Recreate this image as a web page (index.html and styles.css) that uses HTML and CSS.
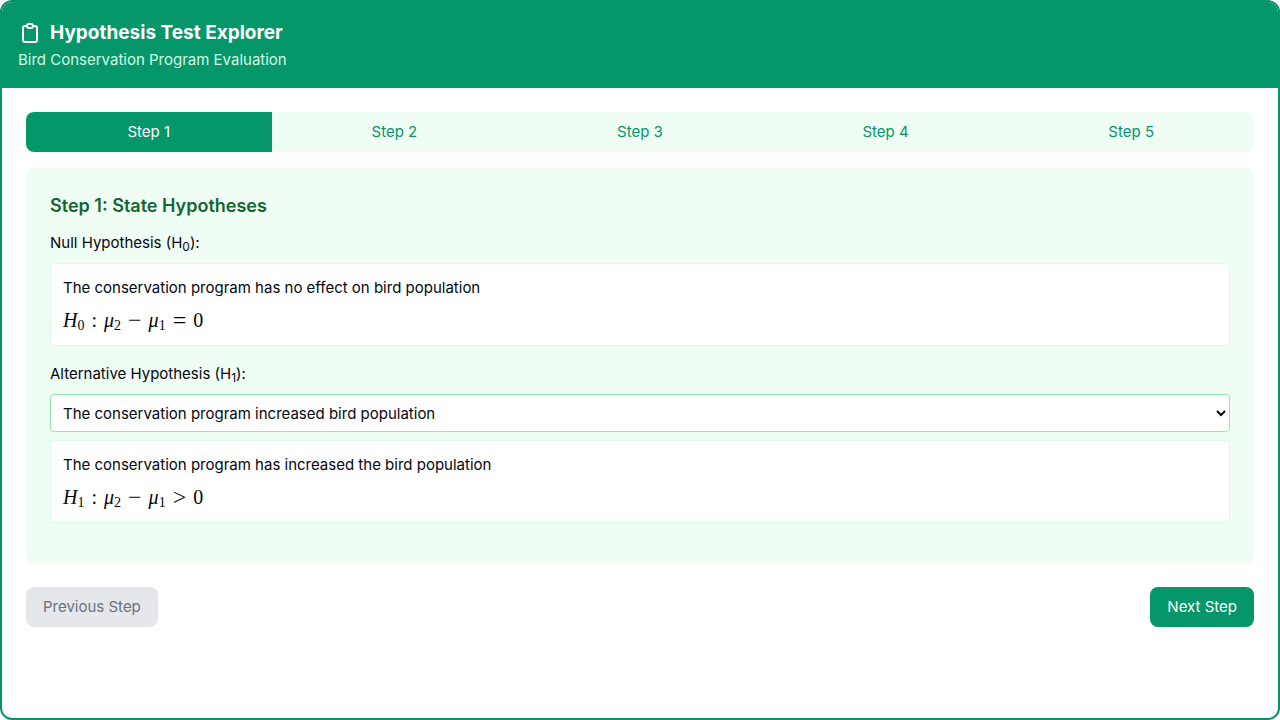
FILE: index.html
```html
<!DOCTYPE html>
<html lang="en">
<head>
    <meta charset="UTF-8">
    <meta name="viewport" content="width=device-width, initial-scale=1.0">
    <title>Hypothesis Test Explorer</title>
    <link rel="stylesheet" href="styles.css">
</head>
<body>
    <div class="explorer">
        <header class="header">
            <h1>
                <svg class="header-icon" viewBox="0 0 24 24" aria-hidden="true">
                    <path d="M9 5H7a2 2 0 0 0-2 2v12a2 2 0 0 0 2 2h10a2 2 0 0 0 2-2V7a2 2 0 0 0-2-2h-2M9 5a2 2 0 0 0 2 2h2a2 2 0 0 0 2-2M9 5a2 2 0 0 1 2-2h2a2 2 0 0 1 2 2"/>
                </svg>
                Hypothesis Test Explorer
            </h1>
            <p>Bird Conservation Program Evaluation</p>
        </header>

        <main class="content">
            <nav class="steps">
                <button type="button" class="step active">Step 1</button>
                <button type="button" class="step">Step 2</button>
                <button type="button" class="step">Step 3</button>
                <button type="button" class="step">Step 4</button>
                <button type="button" class="step">Step 5</button>
            </nav>

            <section class="panel">
                <h2>Step 1: State Hypotheses</h2>

                <div class="field">
                    <p class="label">Null Hypothesis (H<sub>0</sub>):</p>
                    <div class="statement">
                        <p>The conservation program has no effect on bird population</p>
                        <p class="formula"><span><i>H</i><sub>0</sub></span><span>:</span><span><i>μ</i><sub>2</sub></span><span class="operator">−</span><span><i>μ</i><sub>1</sub></span><span class="operator">=</span><span>0</span></p>
                    </div>
                </div>

                <div class="field">
                    <label class="label" for="alternative">Alternative Hypothesis (H<sub>1</sub>):</label>
                    <select id="alternative" class="select">
                        <option value="increased" selected>The conservation program increased bird population</option>
                        <option value="decreased">The conservation program decreased bird population</option>
                        <option value="changed">The conservation program changed bird population</option>
                    </select>
                    <div class="statement">
                        <p>The conservation program has increased the bird population</p>
                        <p class="formula"><span><i>H</i><sub>1</sub></span><span>:</span><span><i>μ</i><sub>2</sub></span><span class="operator">−</span><span><i>μ</i><sub>1</sub></span><span class="operator">&gt;</span><span>0</span></p>
                    </div>
                </div>
            </section>

            <div class="actions">
                <button type="button" class="button" disabled>Previous Step</button>
                <button type="button" class="button">Next Step</button>
            </div>
        </main>
    </div>
</body>
</html>
```
FILE: styles.css
```css
* {
    box-sizing: border-box;
}

body {
    margin: 0;
    font-family: Inter, "Liberation Sans", sans-serif;
    font-size: 15px;
    line-height: 24px;
    color: #030712;
    background-color: white;
}

h1, h2, p {
    margin: 0;
}

button, select {
    font: inherit;
}

sub {
    font-size: 12px;
    line-height: 0;
    vertical-align: -3px;
}

.explorer {
    min-height: 100vh;
    border: 2px solid #059669;
    border-radius: 12px;
    overflow: hidden;
}

.header {
    padding: 16px;
    background-color: #059669;
    color: white;
}

.header h1 {
    display: flex;
    align-items: center;
    gap: 8px;
    font-size: 19px;
    font-weight: 700;
    line-height: 30px;
}

.header p {
    color: #d1fae5;
}

.header-icon {
    width: 24px;
    height: 24px;
    fill: none;
    stroke: currentColor;
    stroke-width: 2;
    stroke-linecap: round;
    stroke-linejoin: round;
}

.content {
    padding: 24px;
}

.steps {
    display: flex;
    border-radius: 8px;
    overflow: hidden;
    margin-bottom: 16px;
}

.step {
    flex: 1;
    padding: 8px;
    border: none;
    background-color: #f0fdf4;
    color: #059669;
    cursor: pointer;
}

.step.active {
    background-color: #059669;
    color: white;
}

.panel {
    padding: 24px;
    border-radius: 8px;
    background-color: #f0fdf4;
}

.panel h2 {
    margin-bottom: 12px;
    font-size: 18px;
    font-weight: 600;
    line-height: 27px;
    color: #166534;
}

.field {
    margin-bottom: 16px;
}

.label {
    display: block;
    margin-bottom: 8px;
}

.statement {
    padding: 12px;
    border: 1px solid #dcfce7;
    border-radius: 4px;
    background-color: white;
}

.formula {
    display: flex;
    gap: 7px;
    margin-top: 8px;
    font-family: "Liberation Serif", serif;
    font-size: 20px;
    line-height: 25px;
}

.formula sub {
    font-size: 14px;
}

.formula .operator {
    font-size: 24px;
}

.select {
    display: block;
    width: 100%;
    height: 38px;
    margin-bottom: 8px;
    padding: 0 8px;
    border: 1px solid #86efac;
    border-radius: 4px;
    background-color: white;
    color: #030712;
}

.actions {
    display: flex;
    justify-content: space-between;
    margin-top: 24px;
}

.button {
    padding: 8px 17px;
    border: none;
    border-radius: 8px;
    background-color: #059669;
    color: white;
    cursor: pointer;
}

.button:disabled {
    background-color: #e5e7eb;
    color: #6b7280;
    cursor: not-allowed;
}
```
